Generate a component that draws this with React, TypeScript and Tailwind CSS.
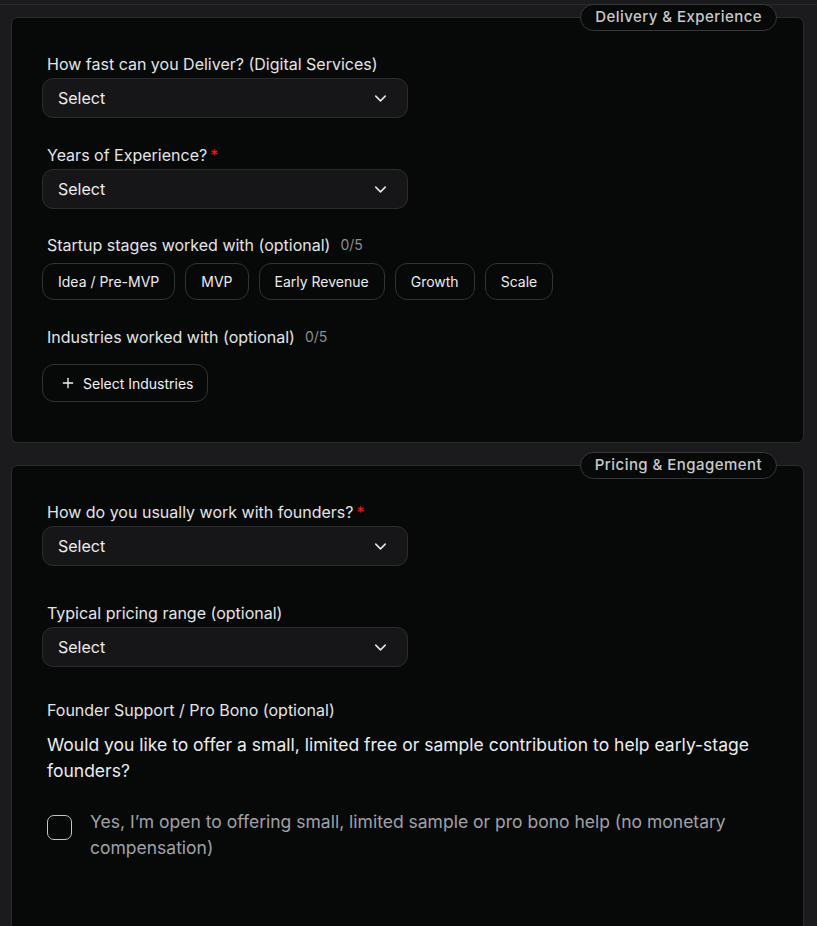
import { ChevronDown, Plus } from "lucide-react";

const stages = ["Idea / Pre-MVP", "MVP", "Early Revenue", "Growth", "Scale"];

function Label({ text, required, count }: { text: string; required?: boolean; count?: string }) {
  return (
    <div className="flex items-center px-[5px] text-[16px] leading-[20px] text-[#e4e4e7]">
      <span>{text}</span>
      {required && <span className="ml-[3px] text-[#ef1c1c]">*</span>}
      {count && <span className="ml-[10px] text-[14px] text-[#8e8e93]">{count}</span>}
    </div>
  );
}

function Select() {
  return (
    <button
      type="button"
      className="mt-[4px] flex h-[40px] w-[366px] items-center justify-between rounded-[11px] border border-[#2c2c2f] bg-[#161618] pl-[15px] pr-[17px] text-[16px] text-[#ececee]"
    >
      <span>Select</span>
      <ChevronDown size={19} strokeWidth={2} className="text-[#e4e4e7]" />
    </button>
  );
}

function Card({ title, children }: { title: string; children: React.ReactNode }) {
  return (
    <section className="relative rounded-[7px] border border-[#2b2b2e] bg-[#070808] px-[30px] pt-[36px] pb-[40px]">
      <div className="absolute right-[26px] top-[-14px] flex h-[27px] items-center rounded-full border border-[#38383b] bg-[#070808] px-[14px] text-[15px] font-medium tracking-[0.45px] text-[#c9c9cc]">
        {title}
      </div>
      {children}
    </section>
  );
}

export default function App() {
  return (
    <div
      className="min-h-[926px] bg-[#1b1b1d] pl-[11px] pr-[13px]"
      style={{ fontFamily: "Inter, 'Noto Sans', sans-serif" }}
    >
      <div className="h-[5px] border-b border-[#29292c] -ml-[11px] -mr-[13px]" />
      <div className="flex flex-col gap-[22px] pt-[12px]">
        <Card title="Delivery & Experience">
          <div className="flex flex-col">
            <Label text="How fast can you Deliver? (Digital Services)" />
            <Select />

            <div className="mt-[27px]">
              <Label text="Years of Experience?" required />
              <Select />
            </div>

            <div className="mt-[26px]">
              <Label text="Startup stages worked with (optional)" count="0/5" />
              <div className="mt-[8px] flex gap-[10px]">
                {stages.map((s) => (
                  <button
                    key={s}
                    type="button"
                    className="h-[37px] rounded-[12px] border border-[#333336] bg-[#070808] px-[15px] text-[14px] text-[#ececee]"
                  >
                    {s}
                  </button>
                ))}
              </div>
            </div>

            <div className="mt-[27px]">
              <Label text="Industries worked with (optional)" count="0/5" />
              <button
                type="button"
                className="mt-[17px] flex h-[38px] w-[166px] items-center gap-[7px] rounded-[12px] border border-[#333336] bg-[#070808] pl-[17px] pr-[13px] text-[14px] text-[#f2f2f4]"
              >
                <Plus size={16} strokeWidth={2} />
                <span>Select Industries</span>
              </button>
            </div>
          </div>
        </Card>

        <Card title="Pricing & Engagement">
          <div className="flex flex-col">
            <Label text="How do you usually work with founders?" required />
            <Select />

            <div className="mt-[37px]">
              <Label text="Typical pricing range (optional)" />
              <Select />
            </div>

            <div className="mt-[33px] px-[5px]">
              <div className="text-[16px] leading-[20px] text-[#e4e4e7]">
                Founder Support / Pro Bono (optional)
              </div>
              <p className="mt-[12px] text-[17.5px] leading-[26px] text-[#ececee]">
                Would you like to offer a small, limited free or sample contribution to help early-stage founders?
              </p>
              <label className="mt-[25px] flex items-start gap-[18px]">
                <span className="mt-[6px] h-[25px] w-[25px] shrink-0 rounded-[7px] border-[1.5px] border-[#c4c4cc] bg-transparent" />
                <span className="text-[17.5px] leading-[26px] text-[#a1a1a8]">
                  Yes, I’m open to offering small, limited sample or pro bono help (no monetary compensation)
                </span>
              </label>
              <div className="h-[60px]" />
            </div>
          </div>
        </Card>
      </div>
    </div>
  );
}
